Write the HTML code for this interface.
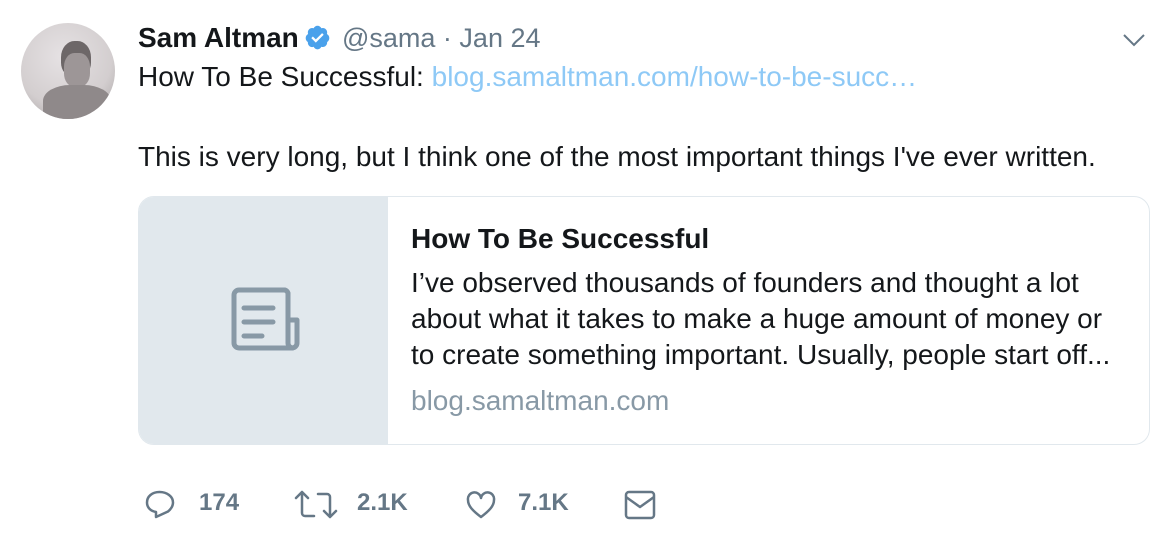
<!DOCTYPE html>
<html><head><style>
body{margin:0;width:1174px;height:540px;background:#fff;font-family:"Liberation Sans",sans-serif;position:relative;overflow:hidden;color:#14171a}
.a{position:absolute;white-space:nowrap}
</style></head><body>
<div class="a" style="left:21px;top:23px;width:94px;height:96px;border-radius:50%;overflow:hidden;background:radial-gradient(circle at 45% 35%,#e6e2e4 0%,#d3cecf 60%,#a19c9d 100%)">
<div style="position:absolute;left:40px;top:18px;width:30px;height:36px;border-radius:45% 45% 40% 40%;background:#6d6768"></div>
<div style="position:absolute;left:43px;top:30px;width:26px;height:34px;border-radius:40%;background:#9d9697"></div>
<div style="position:absolute;left:22px;top:62px;width:68px;height:40px;border-radius:40% 40% 0 0;background:#8f898a"></div>
</div>
<div class="a" style="left:138px;top:22px;font-size:28px;line-height:32px"><b>Sam Altman</b></div>
<svg class="a" style="left:304px;top:24px" width="27" height="27" viewBox="0 0 24 24"><path fill="#4aa1eb" d="M22.5 12.5c0-1.58-.875-2.95-2.148-3.6.154-.435.238-.905.238-1.4 0-2.21-1.71-3.998-3.818-3.998-.47 0-.92.084-1.336.25C14.818 2.415 13.51 1.5 12 1.5s-2.816.917-3.437 2.25c-.415-.165-.866-.25-1.336-.25-2.11 0-3.818 1.79-3.818 4 0 .494.083.964.237 1.4-1.272.65-2.147 2.018-2.147 3.6 0 1.495.782 2.798 1.942 3.486-.02.17-.032.34-.032.514 0 2.21 1.708 4 3.818 4 .47 0 .92-.086 1.335-.25.62 1.334 1.926 2.25 3.437 2.25 1.512 0 2.818-.916 3.437-2.25.415.163.865.248 1.336.248 2.11 0 3.818-1.79 3.818-4 0-.174-.012-.344-.033-.513 1.158-.687 1.943-1.99 1.943-3.484z"/><path fill="#fff" d="M10.5 16.5l-4-4 1.4-1.4 2.6 2.6 5.6-5.6 1.4 1.4z"/></svg>
<div class="a" style="left:342px;top:22px;font-size:27px;line-height:32px;color:#657786">@sama · Jan 24</div>
<svg class="a" style="left:1122px;top:32px" width="24" height="16" viewBox="0 0 24 16"><path d="M2 3l10 10 10-10" fill="none" stroke="#657786" stroke-width="2"/></svg>
<div class="a" style="left:138px;top:61px;font-size:28px;line-height:32px">How To Be Successful: <span style="color:#8ec9f6">blog.samaltman.com/how-to-be-succ…</span></div>
<div class="a" style="left:138px;top:141px;font-size:28px;line-height:32px">This is very long, but I think one of the most important things I've ever written.</div>
<div class="a" style="left:138px;top:196px;width:1010px;height:247px;border:1px solid #e1e8ed;border-radius:16px;overflow:hidden">
<div style="position:absolute;left:0;top:0;width:249px;height:247px;background:#e1e8ed"></div>
<svg style="position:absolute;left:89px;top:90px" width="74" height="72" viewBox="0 0 74 72"><g fill="none" stroke="#8899a6" stroke-width="5" stroke-linecap="round" stroke-linejoin="round"><path d="M60 33h9v23a5 5 0 0 1-5 5h-53a5 5 0 0 1-5-5V8a5 5 0 0 1 5-5h46a5 5 0 0 1 3 3v50a5 5 0 0 0 5 5"/><path d="M16 21h29M16 35h29M16 49h18"/></g></svg>
<div class="a" style="left:272px;top:26px;font-size:28px;line-height:32px;font-weight:bold">How To Be Successful</div>
<div class="a" style="left:272px;top:68px;font-size:28px;line-height:36px">I’ve observed thousands of founders and thought a lot<br>about what it takes to make a huge amount of money or<br>to create something important. Usually, people start off...</div>
<div class="a" style="left:272px;top:188px;font-size:28px;line-height:32px;color:#8899a6">blog.samaltman.com</div>
</div>
<svg class="a" style="left:145px;top:489px" width="30" height="32" viewBox="0 0 30 32"><path d="M11 28l0-5C5 22 2 18 2 13.5 2 7.5 7 3 14.5 3 22 3 28 7.5 28 13.5c0 4-2 6.5-5 9z" fill="none" stroke="#657786" stroke-width="2.5" stroke-linejoin="round"/></svg>
<div class="a" style="left:199px;top:489px;font-size:24px;line-height:28px;font-weight:bold;color:#657786">174</div>
<svg class="a" style="left:293px;top:489px" width="46" height="32" viewBox="0 0 46 32"><g fill="none" stroke="#657786" stroke-width="2.5" stroke-linecap="round" stroke-linejoin="round"><path d="M3 9l6-6 6 6M9 4v20a3 3 0 0 0 3 3h9"/><path d="M43 22l-6 6-6-6M37 27V8a3 3 0 0 0-3-3h-9"/></g></svg>
<div class="a" style="left:357px;top:489px;font-size:24px;line-height:28px;font-weight:bold;color:#657786">2.1K</div>
<svg class="a" style="left:465px;top:489px" width="32" height="32" viewBox="0 0 32 32"><path d="M16 28C8 22 3 17 3 11a6.5 6.5 0 0 1 13-2 6.5 6.5 0 0 1 13 2c0 6-5 11-13 17z" fill="none" stroke="#657786" stroke-width="2.5" stroke-linejoin="round"/></svg>
<div class="a" style="left:518px;top:489px;font-size:24px;line-height:28px;font-weight:bold;color:#657786">7.1K</div>
<svg class="a" style="left:624px;top:489px" width="32" height="32" viewBox="0 0 32 32"><g fill="none" stroke="#657786" stroke-width="2.5" stroke-linejoin="round"><rect x="2" y="3" width="28" height="26" rx="3"/><path d="M2 8l14 10 14-10"/></g></svg>
</body></html>
